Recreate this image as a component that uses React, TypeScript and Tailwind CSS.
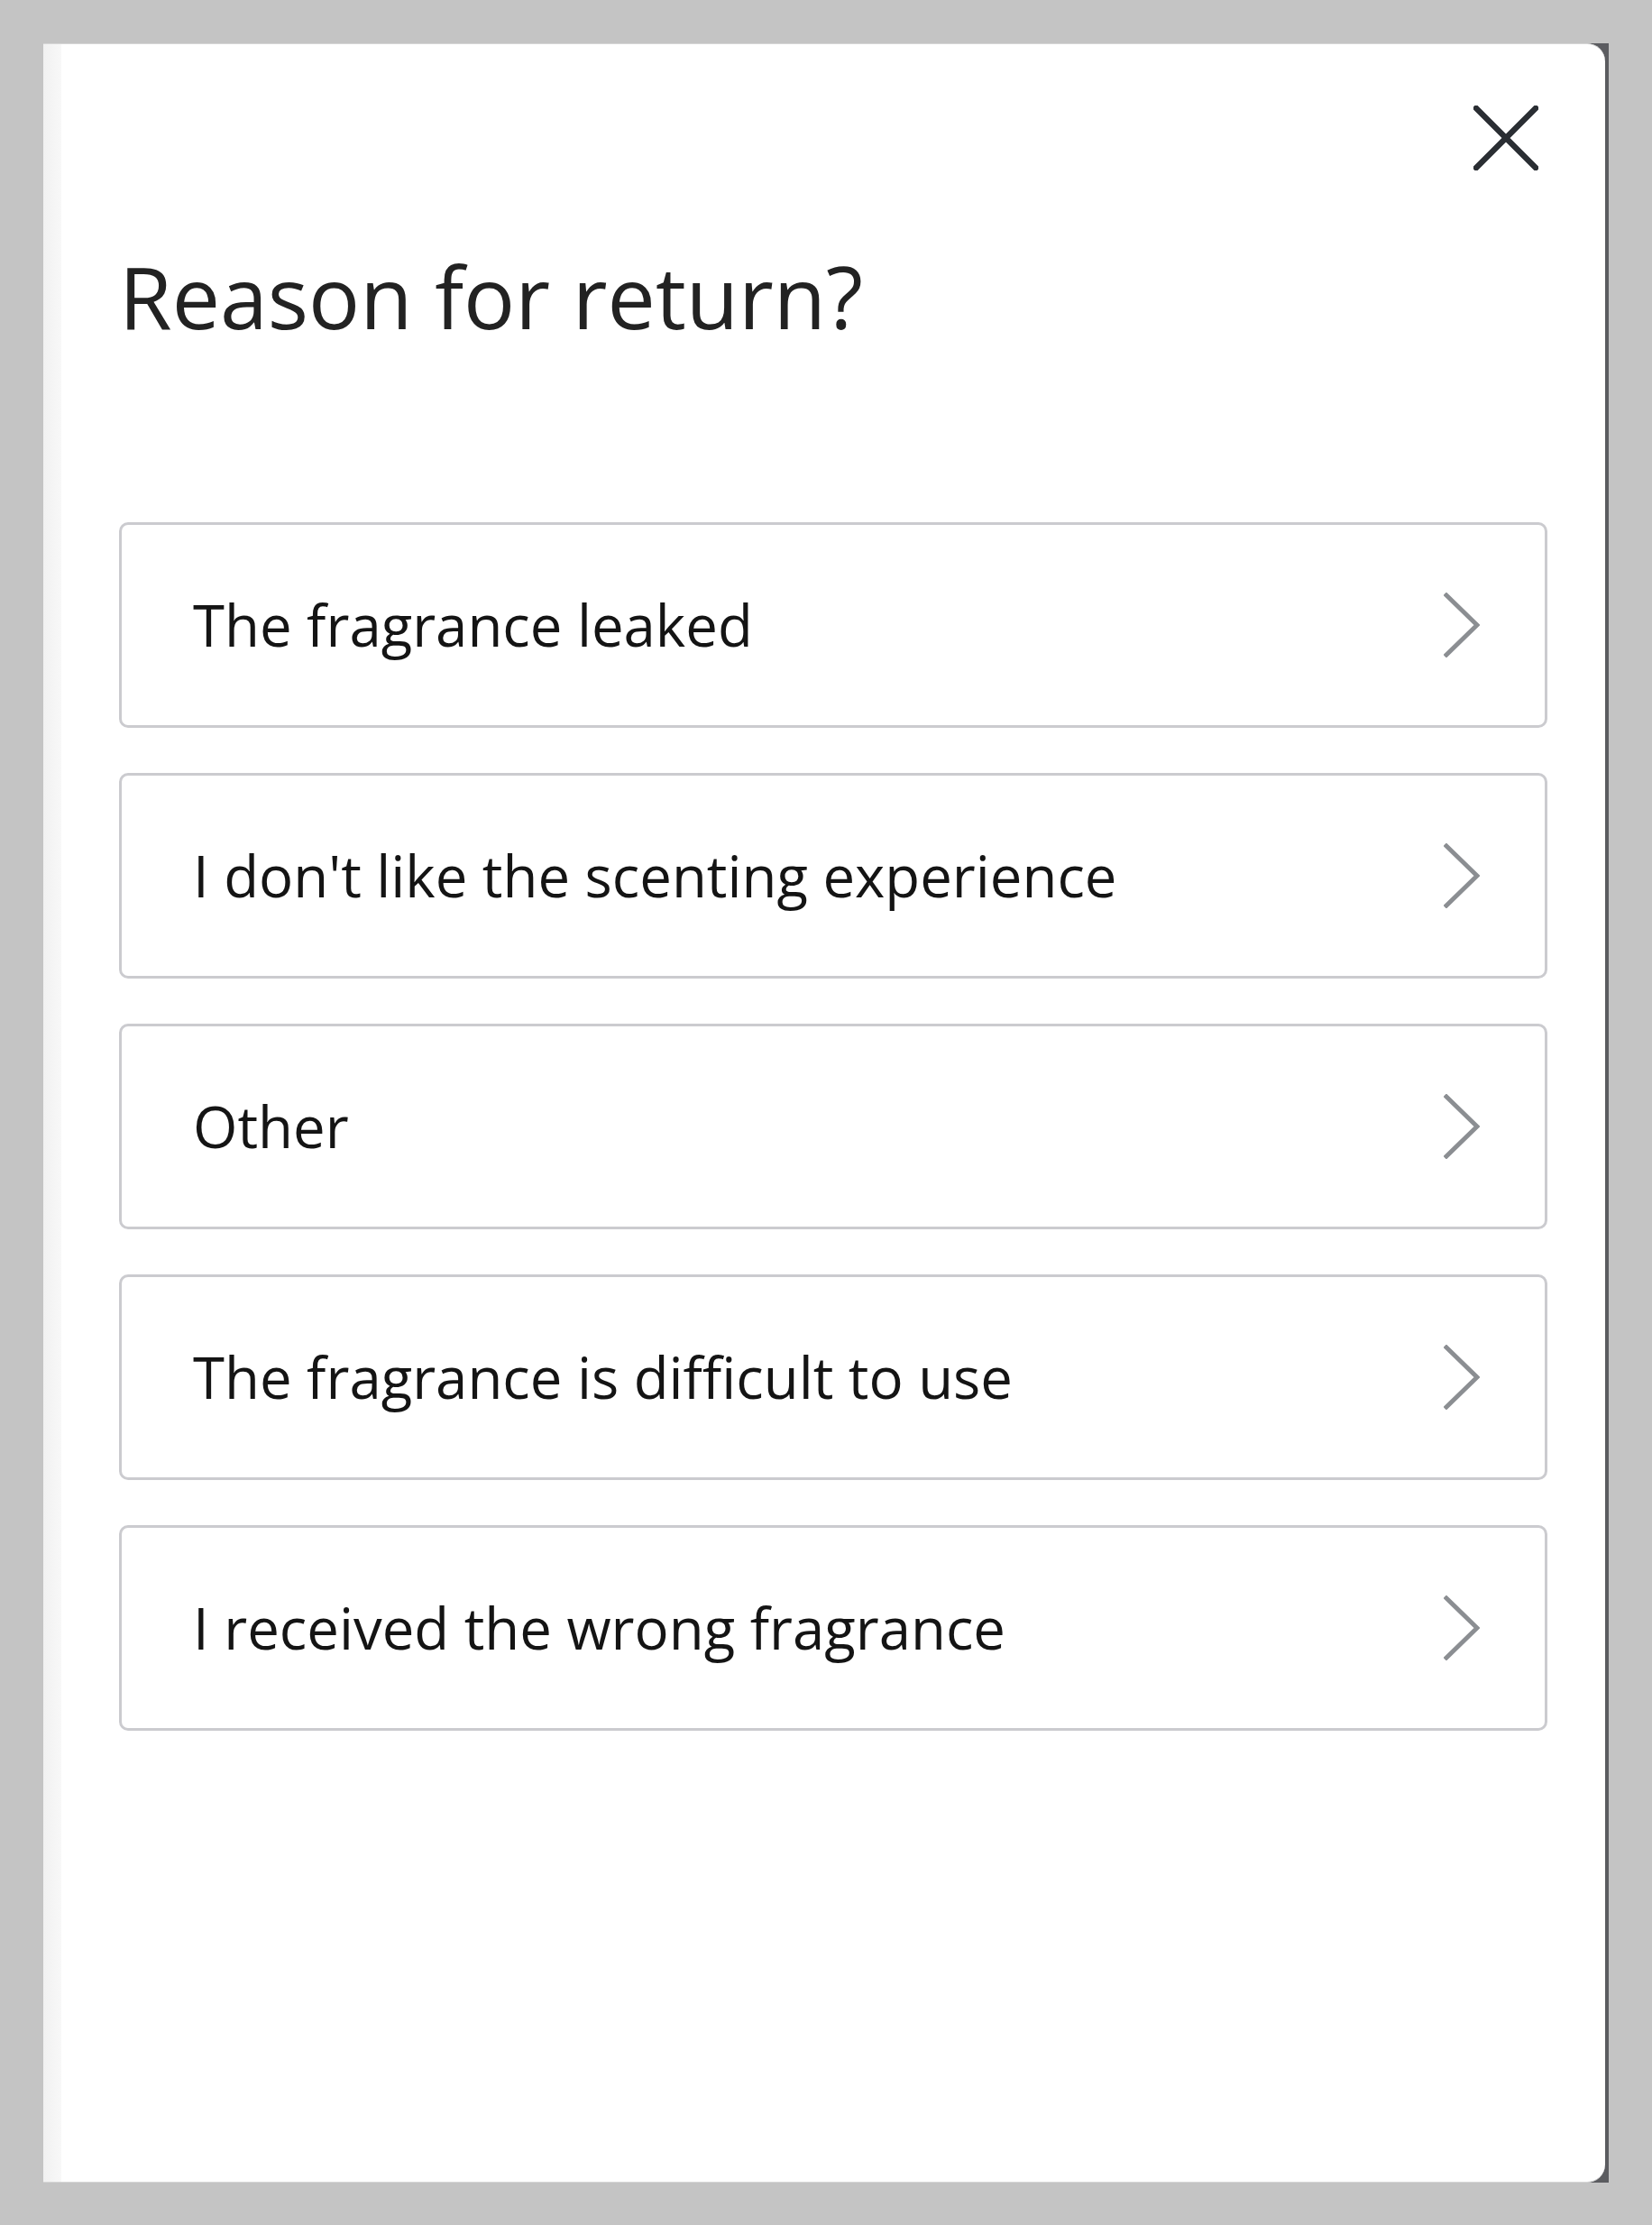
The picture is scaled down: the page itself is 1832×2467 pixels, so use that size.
import type { FC } from "react";

const reasons = [
  "The fragrance leaked",
  "I don't like the scenting experience",
  "Other",
  "The fragrance is difficult to use",
  "I received the wrong fragrance",
];

const CloseIcon: FC = () => (
  <svg width="72" height="72" viewBox="0 0 72 72" fill="none" aria-hidden>
    <path
      d="M3 3L69 69M69 3L3 69"
      stroke="#2a2e33"
      strokeWidth="6.5"
      strokeLinecap="square"
    />
  </svg>
);

const Chevron: FC = () => (
  <svg width="40" height="72" viewBox="0 0 40 72" fill="none" aria-hidden>
    <path
      d="M3 3L37 36L3 69"
      stroke="#8b8e92"
      strokeWidth="5"
      strokeLinecap="square"
    />
  </svg>
);

const ReasonRow: FC<{ label: string }> = ({ label }) => (
  <button
    type="button"
    className="flex h-[228px] w-full items-center justify-between rounded-[10px] border-[3px] border-[#cbcbcf] bg-white pl-[79px] pr-[72px] text-left"
  >
    <span className="text-[63.5px] leading-none text-[#141414]">{label}</span>
    <Chevron />
  </button>
);

export default function App() {
  return (
    <div
      className="min-h-[2467px] w-[1832px] bg-[#c4c4c4] pl-[48px] pt-[48px]"
      style={{ fontFamily: '"Open Sans", "Noto Sans", sans-serif' }}
    >
      <div className="flex h-[2372px] w-[1736px] bg-[#5b5c60]">
        <div className="mr-[4px] flex flex-1 rounded-r-[20px] border-y border-[#d6d6d6] bg-white">
          <div className="w-[20px] bg-gradient-to-r from-[#f1f1f1] to-[#f8f8f8]" />
          <div className="flex flex-1 flex-col pl-[64px] pr-[64px]">
            <div className="flex justify-end pr-[10px] pt-[68px]">
              <button type="button" aria-label="Close">
                <CloseIcon />
              </button>
            </div>
            <h2 className="mt-[92px] text-[95px] leading-none font-normal text-[#222222]">
              Reason for return?
            </h2>
            <div className="mt-[203px] flex flex-col gap-[50px]">
              {reasons.map((reason) => (
                <ReasonRow key={reason} label={reason} />
              ))}
            </div>
          </div>
        </div>
      </div>
    </div>
  );
}
